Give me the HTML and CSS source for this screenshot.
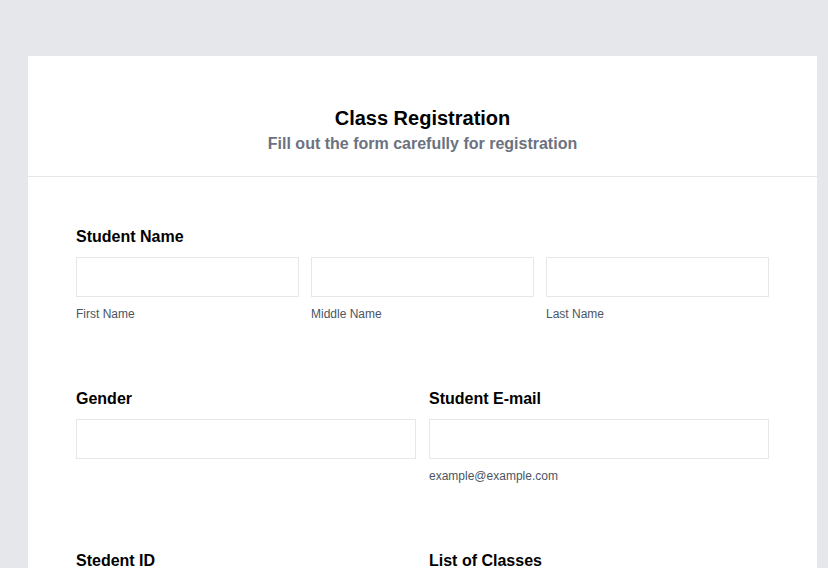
FILE: index.html
```html
<!DOCTYPE html>
<html lang="en">
<head>
<meta charset="utf-8">
<title>Class Registration</title>
<link rel="stylesheet" href="styles.css">
</head>
<body>
<main class="card">
  <header class="card-header">
    <h1 class="title">Class Registration</h1>
    <p class="subtitle">Fill out the form carefully for registration</p>
  </header>
  <form class="card-body">
    <div class="row">
      <div class="field">
        <label class="label">Student Name</label>
        <div class="grid grid-3">
          <div class="sub">
            <input class="input" type="text">
            <span class="hint">First Name</span>
          </div>
          <div class="sub">
            <input class="input" type="text">
            <span class="hint">Middle Name</span>
          </div>
          <div class="sub">
            <input class="input" type="text">
            <span class="hint">Last Name</span>
          </div>
        </div>
      </div>
    </div>
    <div class="row grid grid-2">
      <div class="field">
        <label class="label">Gender</label>
        <div class="sub">
          <input class="input" type="text">
        </div>
      </div>
      <div class="field">
        <label class="label">Student E-mail</label>
        <div class="sub">
          <input class="input" type="email">
          <span class="hint">example@example.com</span>
        </div>
      </div>
    </div>
    <div class="row grid grid-2">
      <div class="field">
        <label class="label">Stedent ID</label>
        <div class="sub">
          <input class="input" type="text">
        </div>
      </div>
      <div class="field">
        <label class="label">List of Classes</label>
        <div class="sub">
          <input class="input" type="text">
        </div>
      </div>
    </div>
  </form>
</main>
</body>
</html>
```

FILE: styles.css
```css
* { box-sizing: border-box; }

html, body {
  margin: 0;
  padding: 0;
}

body {
  background: #e5e7eb;
  font-family: "Liberation Sans", Arial, sans-serif;
  color: #000;
  padding: 56px 11px 0 28px;
}

.card {
  background: #fff;
  width: 789px;
}

.card-header {
  padding: 49px 24px 20px;
  text-align: center;
  border-bottom: 1px solid #e5e7eb;
}

.title {
  margin: 0;
  font-size: 20px;
  line-height: 26px;
  font-weight: 700;
  color: #000;
}

.subtitle {
  margin: 0;
  padding-top: 1px;
  font-size: 16px;
  line-height: 24px;
  font-weight: 700;
  color: #6b7280;
}

.card-body {
  padding: 47px 48px 40px;
  display: flex;
  flex-direction: column;
  gap: 64px;
}

.grid {
  display: grid;
  gap: 12px;
}

.grid-3 { grid-template-columns: repeat(3, 1fr); }
.grid-2 { grid-template-columns: repeat(2, 1fr); gap: 13px; }

.field {
  display: flex;
  flex-direction: column;
  gap: 8px;
}

.label {
  padding-top: 1px;
  font-size: 16px;
  line-height: 24px;
  font-weight: 700;
  color: #000;
}

.sub {
  display: flex;
  flex-direction: column;
  gap: 9px;
}

.input {
  display: block;
  width: 100%;
  height: 40px;
  margin: 0;
  border: 1px solid #e5e7eb;
  border-radius: 0;
  background: #fff;
  font: inherit;
  padding: 0 10px;
}

.hint {
  font-size: 12px;
  line-height: 16px;
  color: #4b5563;
}
```
